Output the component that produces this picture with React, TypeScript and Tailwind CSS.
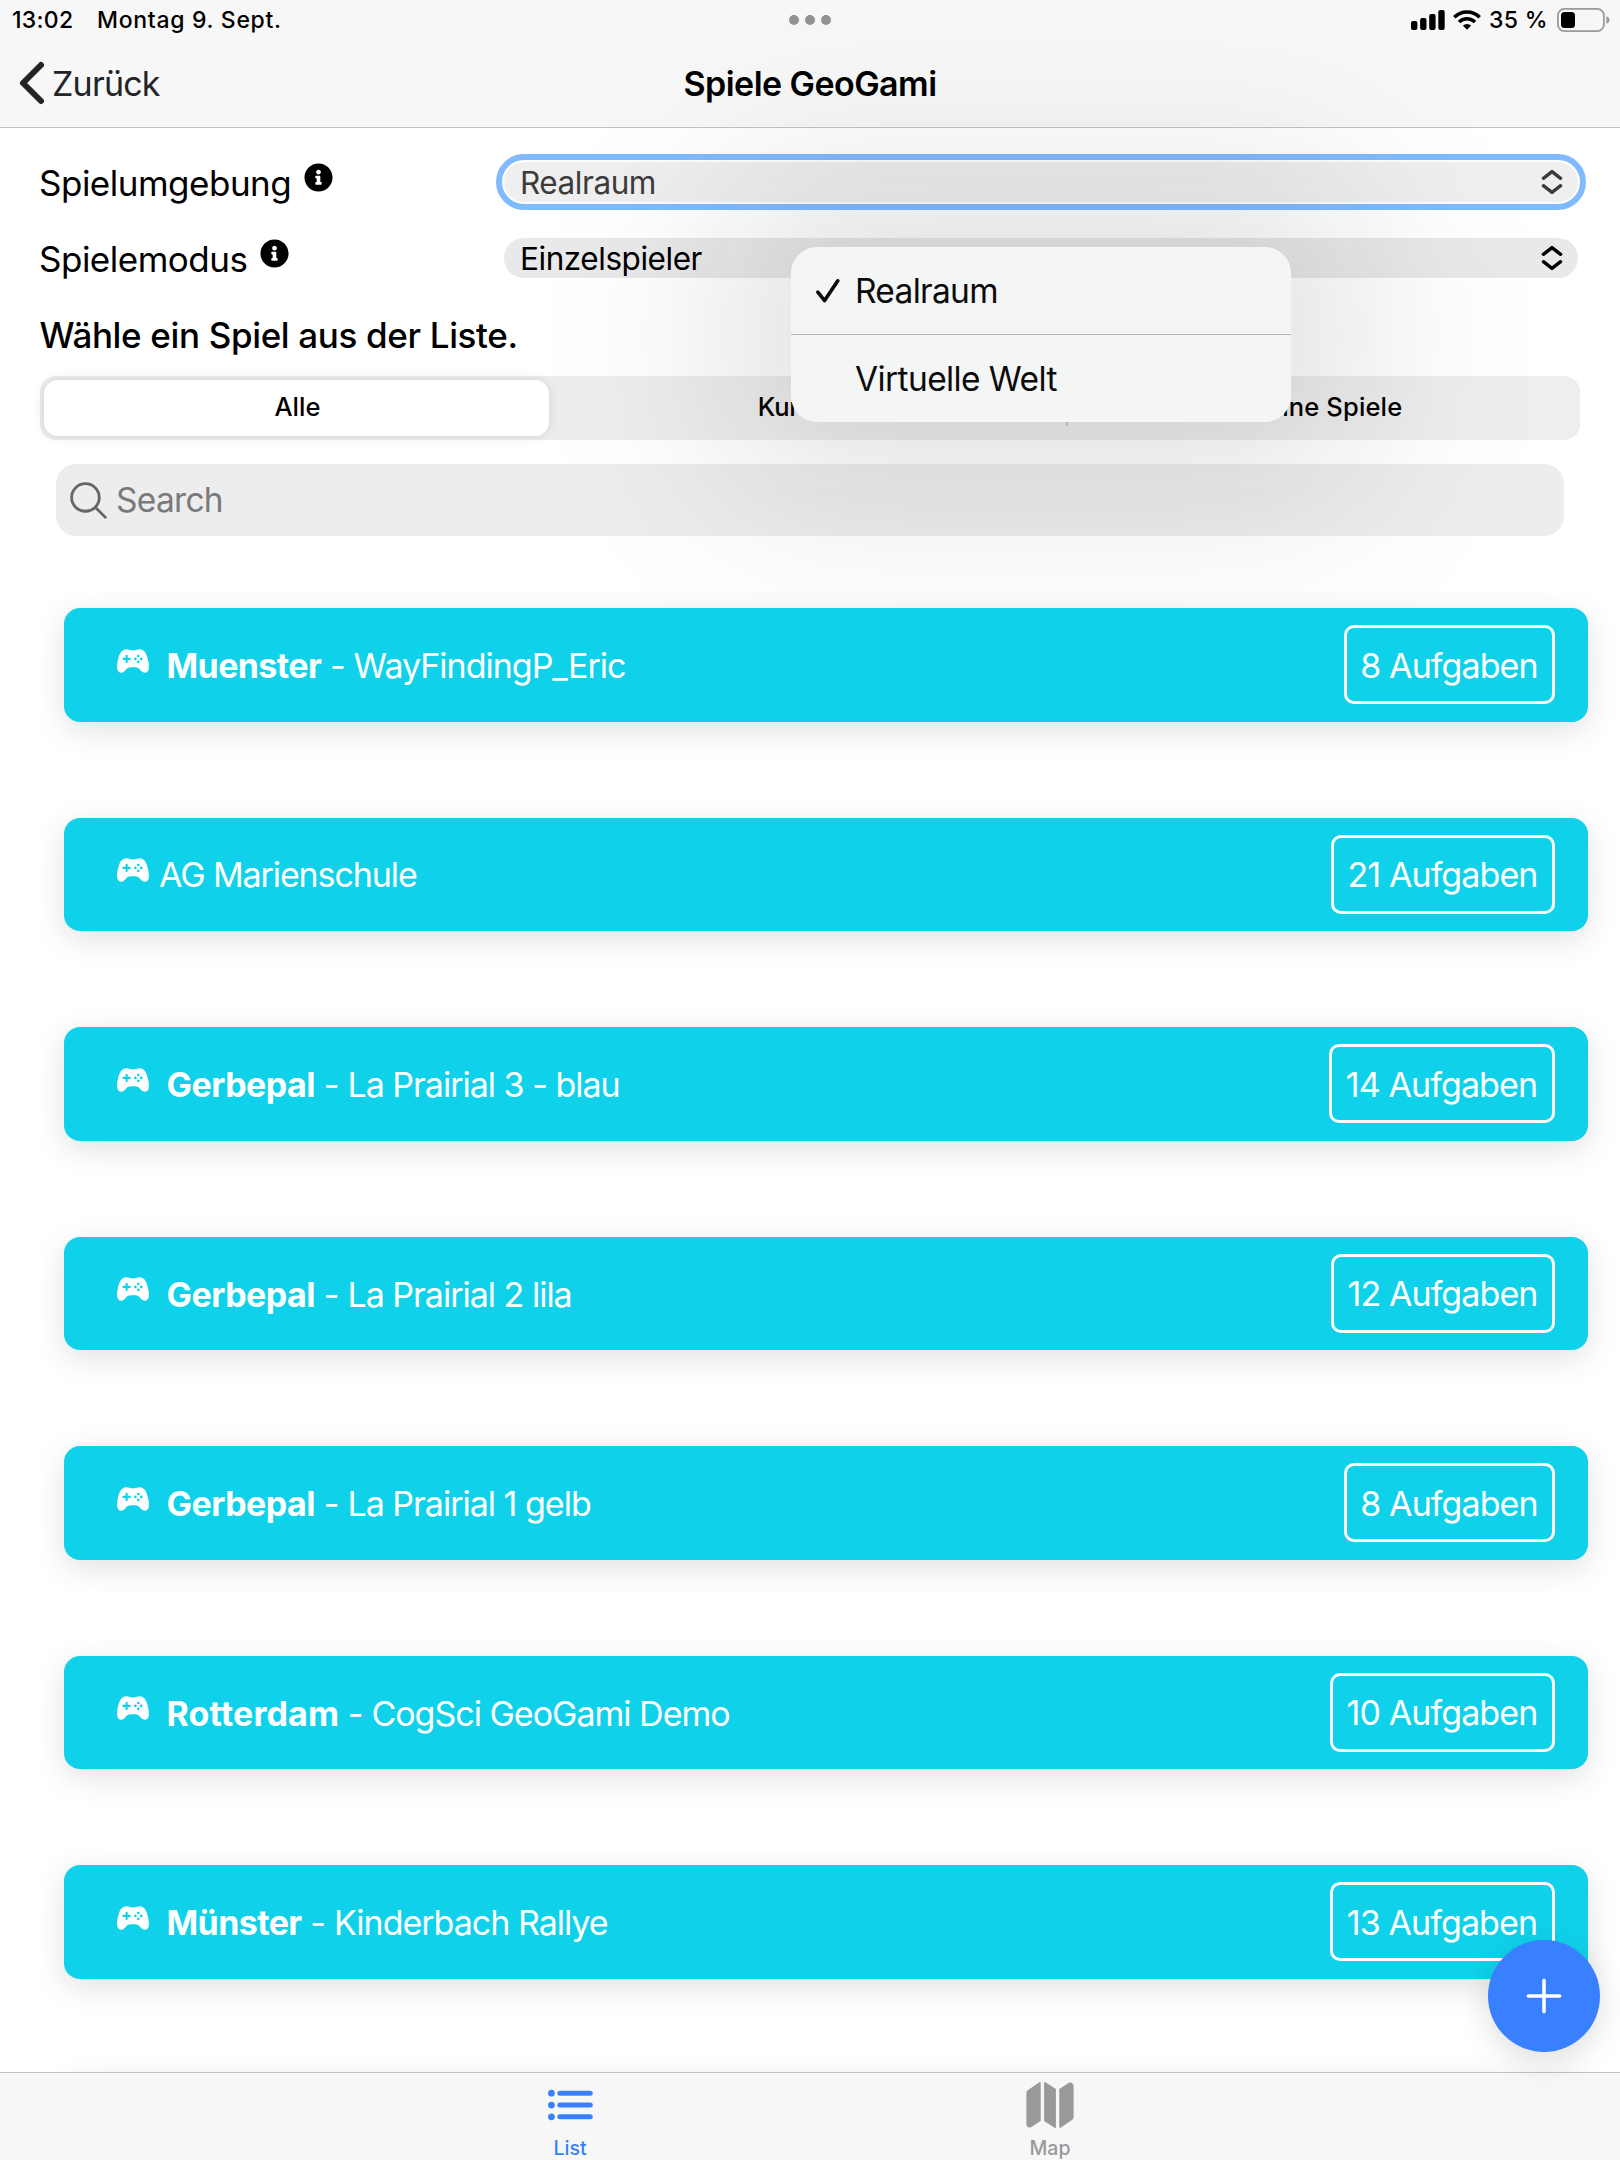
import React from "react";
import {
  IoAdd,
  IoChevronBack,
  IoGameController,
  IoList,
  IoMap,
  IoSearchOutline,
} from "react-icons/io5";
import { FaInfoCircle } from "react-icons/fa";

type Game = { place?: string; placeTracking?: string; name: string; tasks: string; badge: string };

const games: Game[] = [
  { place: "Muenster", placeTracking: "tracking-[-0.6px]", name: "WayFindingP_Eric", tasks: "8 Aufgaben", badge: "w-[211px]" },
  { name: "AG Marienschule", tasks: "21 Aufgaben", badge: "w-[224px]" },
  { place: "Gerbepal", placeTracking: "tracking-[-0.5px]", name: "La Prairial 3 - blau", tasks: "14 Aufgaben", badge: "w-[226px]" },
  { place: "Gerbepal", placeTracking: "tracking-[-0.5px]", name: "La Prairial 2 lila", tasks: "12 Aufgaben", badge: "w-[224px]" },
  { place: "Gerbepal", placeTracking: "tracking-[-0.5px]", name: "La Prairial 1 gelb", tasks: "8 Aufgaben", badge: "w-[211px]" },
  { place: "Rotterdam", placeTracking: "tracking-[0.1px]", name: "CogSci GeoGami Demo", tasks: "10 Aufgaben", badge: "w-[225px]" },
  { place: "Münster", placeTracking: "tracking-[-0.6px]", name: "Kinderbach Rallye", tasks: "13 Aufgaben", badge: "w-[225px]" },
];

function StatusBar() {
  return (
    <div className="relative flex h-10 items-center pl-3 pr-[10px] text-[23px] font-medium leading-10">
      <span className="w-[85px] tracking-[0.3px]">13:02</span>
      <span className="tracking-[0.7px]">Montag 9. Sept.</span>
      <div className="absolute left-[789px] top-[15px] flex gap-[6px]">
        <span className="size-[10px] rounded-full bg-[#929292]" />
        <span className="size-[10px] rounded-full bg-[#929292]" />
        <span className="size-[10px] rounded-full bg-[#929292]" />
      </div>
      <div className="ml-auto flex items-center">
        <svg width="34" height="20" viewBox="0 0 34 20" className="mr-2">
          <rect x="0" y="11" width="6.4" height="9" rx="2" />
          <rect x="9.1" y="8" width="6.4" height="12" rx="2" />
          <rect x="18.2" y="4" width="6.4" height="16" rx="2" />
          <rect x="27.3" y="0" width="6.4" height="20" rx="2" />
        </svg>
        <svg width="28" height="20" viewBox="0 0 28 20" fill="none" stroke="#000" strokeWidth="3.6">
          <path d="M1.3 7.2A18 18 0 0 1 26.7 7.2" />
          <path d="M6 12A11.3 11.3 0 0 1 22 12" />
          <path d="M14 19.8L9.8 15.6A6 6 0 0 1 18.2 15.6Z" fill="#000" stroke="none" />
        </svg>
        <span className="ml-2 w-[68px] whitespace-nowrap tracking-[0.3px]">35 %</span>
        <svg width="53" height="24" viewBox="0 0 53 24">
          <rect x="0.9" y="0.9" width="46" height="22.2" rx="6.5" fill="none" stroke="#9b9b9b" strokeWidth="1.8" />
          <rect x="4" y="4" width="14" height="16" rx="3.5" />
          <path d="M49.3 8.2Q52.6 9.5 52.6 12T49.3 15.8Z" fill="#9b9b9b" />
        </svg>
      </div>
    </div>
  );
}

function UpDown({ color }: { color: string }) {
  return (
    <svg width="22" height="26" viewBox="0 0 22 26" fill="none" stroke={color} strokeWidth="3.4" strokeLinecap="round" strokeLinejoin="round">
      <path d="M2.4 9.3L11 2.6L19.6 9.3" />
      <path d="M2.4 16.7L11 23.4L19.6 16.7" />
    </svg>
  );
}

function SearchField() {
  return (
    <div className="ml-[56px] mt-6 flex h-[72px] w-[1508px] items-center rounded-[20px] bg-[#ededed] pl-[10px]">
      <IoSearchOutline className="size-[45px] text-[#666]" />
      <span className="ml-[5px] text-[33.5px] tracking-[-0.7px] text-[#7a7a7a]">Search</span>
    </div>
  );
}

function GameCard({ game }: { game: Game }) {
  return (
    <div className="flex h-[113.5px] items-center rounded-2xl bg-[#0fd2ea] pl-[52px] pr-[33px] text-[34px] text-white shadow-[0_8px_32px_rgba(0,0,0,0.12)]">
      <IoGameController className="-mt-[8px] size-[34px]" />
      {game.place ? (
        <span className="ml-[16.5px] mt-[2px] tracking-[-1px]">
          <b className={`font-bold ${game.placeTracking}`}>{game.place}</b>
          <span className="tracking-[-0.8px]"> - </span>
          {game.name}
        </span>
      ) : (
        <span className="ml-[9px] mt-px tracking-[-1.1px]">{game.name}</span>
      )}
      <span className={`${game.badge} ml-auto flex h-[79px] items-center justify-center whitespace-nowrap rounded-[10px] border-[3px] border-white pr-px pt-px tracking-[-0.9px]`}>
        {game.tasks}
      </span>
    </div>
  );
}

function Popup() {
  return (
    <div className="absolute left-[791px] top-[247px] z-20 h-[175px] w-[500px] text-[33.5px] text-[#0c0c0c]">
      <div className="absolute -inset-[65px] rounded-[60px] bg-[#0c0c06]/12 blur-[88px]" />
      <div className="relative h-full overflow-hidden rounded-[26px] bg-[#f4f5f5]">
        <div className="flex h-[88px] items-center border-b border-[#b4b4b4] pl-[24px]">
          <svg width="26" height="26" viewBox="0 0 26 26" fill="none" stroke="#0c0c0c" strokeWidth="3.6" strokeLinecap="round" strokeLinejoin="round">
            <path d="M2.8 14.2L9.6 22.6L22.8 2.8" />
          </svg>
          <span className="ml-[14px] mt-[2px] tracking-[-0.7px]">Realraum</span>
        </div>
        <div className="flex h-[87px] items-center pl-[64px] pt-[2px] tracking-[-0.6px]">Virtuelle Welt</div>
      </div>
    </div>
  );
}

export default function App() {
  return (
    <div className="relative flex h-[2160px] w-[1620px] flex-col overflow-hidden bg-white font-['Inter',sans-serif] text-black">
      <header className="h-32 shrink-0 border-b border-[#c3c3c3] bg-[#f7f7f7]">
        <StatusBar />
        <div className="relative flex h-[87px] items-center justify-center">
          <div className="absolute left-0 top-0 flex h-[87px] items-center text-[34px] text-[#222428]">
            <IoChevronBack className="-mt-px size-16" />
            <span className="-ml-[12px] -mt-px tracking-[-0.8px]">Zurück</span>
          </div>
          <h1 className="text-[34px] font-semibold tracking-[-0.55px]">Spiele GeoGami</h1>
        </div>
      </header>

      <main className="min-h-0 flex-1 overflow-hidden pt-[26px]">
        <div className="flex h-14 items-center pl-[39px]">
          <div className="flex w-[465px] items-center pt-[2px] text-[35px] tracking-[-0.5px]">
            <span>Spielumgebung</span>
            <FaInfoCircle className="-mt-[12px] ml-[13px] size-[29px]" />
          </div>
          <div className="flex h-10 w-[1074px] items-center justify-between rounded-full bg-[#efefef] pl-4 pr-[15px] text-[31.5px] tracking-[-0.45px] text-[#3c3c3c] outline-[6px] outline-offset-2 outline-[#80bbff]">
            <span className="mt-[2px]">Realraum</span>
            <UpDown color="#3c3c3c" />
          </div>
        </div>
        <div className="mt-5 flex h-14 items-center pl-[39px]">
          <div className="flex w-[465px] items-center pt-[2px] text-[35px] tracking-[-0.5px]">
            <span>Spielemodus</span>
            <FaInfoCircle className="-mt-[12px] ml-[13px] size-[29px]" />
          </div>
          <div className="flex h-10 w-[1074px] items-center justify-between rounded-full bg-[#e9e9e9] pl-4 pr-[15px] text-[31.5px] tracking-[-0.45px]">
            <span className="mt-[2px]">Einzelspieler</span>
            <UpDown color="#000" />
          </div>
        </div>

        <h2 className="ml-[39.5px] mt-[9px] h-[81px] text-[35px] font-medium leading-[80px] tracking-[-0.35px]">
          Wähle ein Spiel aus der Liste.
        </h2>

        <div className="ml-[40px] flex h-16 w-[1540px] items-center rounded-2xl bg-[#eee] p-1 text-[25.5px] font-[450] leading-[32px]">
          <div className="flex h-14 w-[505px] items-center justify-center rounded-[14px] bg-white pb-[2px] pl-[2px] shadow-[0_0_12px_rgba(0,0,0,0.13)]">
            Alle
          </div>
          <div className="flex h-9 w-[519px] items-center justify-center border-r-2 border-[#c6c6c6] pb-[2px] pl-[4px] tracking-[-0.2px]">
            Kuratiert
          </div>
          <div className="flex flex-1 items-center justify-center pb-[2px] pl-[2px] tracking-[0.15px]">Meine Spiele</div>
        </div>

        <SearchField />

        <div className="ml-[64px] mt-[72px] flex w-[1524px] flex-col gap-24">
          {games.map((game, i) => (
            <GameCard key={i} game={game} />
          ))}
          <div className="h-[113.5px] rounded-2xl bg-[#0fd2ea] shadow-[0_8px_32px_rgba(0,0,0,0.12)]" />
        </div>
      </main>

      <footer className="flex h-[88px] shrink-0 justify-center border-t border-[#c3c3c3] bg-[#f7f7f7] text-[19.5px] font-medium">
        <div className="flex w-[480px] flex-col items-center pt-[5px] text-[#3880ff]">
          <IoList className="size-[54px]" />
          <span className="mt-[4px] leading-[24px]">List</span>
        </div>
        <div className="flex w-[480px] flex-col items-center pt-[5px] text-[#999]">
          <IoMap className="size-[54px]" />
          <span className="mt-[4px] leading-[24px]">Map</span>
        </div>
      </footer>

      <Popup />

      <button className="absolute left-[1488px] top-[1940px] z-10 flex size-28 items-center justify-center rounded-full bg-[#3880ff] text-white shadow-[0_8px_32px_rgba(0,0,0,0.14)]">
        <IoAdd className="size-14" />
      </button>
    </div>
  );
}
